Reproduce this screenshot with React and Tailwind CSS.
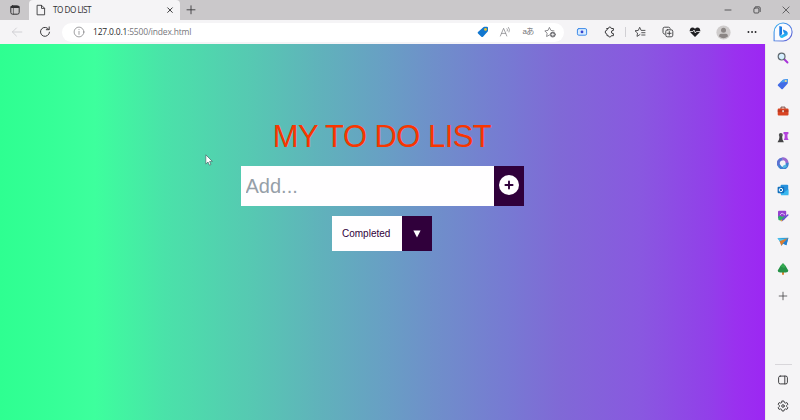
import React from "react";

const line = { fill: "none", stroke: "currentColor", strokeLinecap: "round", strokeLinejoin: "round" };

function Cell({ className, children }) {
  return <div className={`flex shrink-0 items-center justify-center ${className}`}>{children}</div>;
}

function Icon({ size = 12, sw = 0.9, className = "text-[#3a3a3c]", children }) {
  return (
    <svg width={size} height={size} viewBox="0 0 12 12" className={`block shrink-0 ${className}`} {...line} strokeWidth={sw}>
      {children}
    </svg>
  );
}

function TabBar() {
  return (
    <div className="flex h-5 shrink-0 bg-[#cac8ca]">
      <Cell className="w-[29px]">
        <Icon size={12} sw={1} className="text-[#303032]">
          <rect x="1.8" y="1.8" width="8.4" height="8.4" rx="1.8" />
          <path d="M4.4 4.4V10" strokeWidth="0.6" />
          <path d="M2.4 3H9.6" strokeWidth="1.9" />
        </Icon>
      </Cell>
      <div className="flex w-[151px] items-center rounded-t-[4px] bg-[#f5f4f6]">
        <Cell className="w-6">
          <Icon size={12}>
            <path d="M2.5 1.3H6.6L9.6 4.3V10.8H2.5ZM6.5 1.5V4.4H9.4" />
          </Icon>
        </Cell>
        <span className="font-['Open_Sans','Noto_Sans',sans-serif] text-[8.2px] leading-5 tracking-[-0.5px] text-[#303032]">TO DO LIST</span>
        <Cell className="ml-auto w-[21px]">
          <Icon size={12} sw={1}>
            <path d="M3.7 3.8L8.3 8.4M8.3 3.8L3.7 8.4" />
          </Icon>
        </Cell>
      </div>
      <Cell className="w-[21px]">
        <Icon size={12}>
          <path d="M6 1.8V9.8M2 5.8H10" />
        </Icon>
      </Cell>
      <div className="ml-auto flex text-[#454547]">
        <Cell className="w-7"><Icon sw={0.8}><path d="M3 6H9" /></Icon></Cell>
        <Cell className="w-[29px]">
          <Icon sw={0.8}>
            <rect x="2.9" y="4" width="5" height="5" rx="1" />
            <path d="M4.5 2.8H8Q9.2 2.8 9.2 4V7.6" />
          </Icon>
        </Cell>
        <Cell className="w-[29px]"><Icon sw={0.7}><path d="M2.9 2.9L9.1 9.1M9.1 2.9L2.9 9.1" /></Icon></Cell>
      </div>
    </div>
  );
}

function Tag() {
  return (
    <svg width="12" height="12" viewBox="0 0 12 12" className="block">
      <path d="M6.3 1.2Q6.8 .8 7.4 .8L9.8 .7Q11 .7 11 1.8V4.6Q11 5.3 10.5 5.8L6 10.7Q5.2 11.4 4.4 10.7L1 7.5Q.2 6.7 1 5.9Z" fill="#1277cf" />
      <circle cx="8.5" cy="3.4" r="1.4" fill="#f4c430" />
    </svg>
  );
}

function Bing() {
  return (
    <svg width="20" height="20" viewBox="0 0 20 20" className="block">
      <defs>
        <linearGradient id="bubble" x1="0" y1="0" x2="1" y2="1">
          <stop offset="0" stopColor="#35b5f2" />
          <stop offset=".55" stopColor="#4f7de0" />
          <stop offset="1" stopColor="#6a63d5" />
        </linearGradient>
        <linearGradient id="bee" x1="0" y1="0" x2="0" y2="1">
          <stop offset="0" stopColor="#1b7be6" />
          <stop offset="1" stopColor="#2cc5f5" />
        </linearGradient>
      </defs>
      <path d="M1.1 18.8V10A9 9 0 1 1 10 19Z" fill="#fbfbfe" stroke="url(#bubble)" strokeWidth="1.1" />
      <path d="M6.3 3.9L9 4.8V12.1L7 14.2Q6.3 13.8 6.3 13Z" fill="#1978e3" />
      <path d="M9.9 7.4L13.4 8.9Q15 9.8 14.8 11.8Q14.6 13.1 13.4 13.7L9.3 16Q7.8 16.4 6.6 14.2L11.4 11.7L10.5 10.2Z" fill="url(#bee)" />
    </svg>
  );
}

function Toolbar() {
  return (
    <div className="flex h-6 shrink-0 items-center bg-[#f5f4f6]">
      <Cell className="w-[33px]">
        <Icon className="text-[#cdccd0]"><path d="M10.8 6H1.4M5.4 2L1.4 6L5.4 10" /></Icon>
      </Cell>
      <Cell className="w-[29px] pr-[5px]">
        <Icon size={12} sw={1}><path d="M9.8 3.4A4.5 4.5 0 1 0 10.5 6.2M10.2 .9V3.7H7.3" /></Icon>
      </Cell>
      <div className="flex h-[19px] w-[502px] items-center rounded-full bg-white">
        <Cell className="w-[31px] pl-[3px]">
          <Icon sw={0.7} className="text-[#77777a]">
            <circle cx="6" cy="6" r="4.9" /><path d="M6 5.4V8.4M6 3.5V3.7" />
          </Icon>
        </Cell>
        <span className="-mt-px font-['Open_Sans','Noto_Sans',sans-serif] text-[8.5px] leading-[19px] tracking-[-0.19px] text-[#77777c]">
          <span className="text-[#29292c]">127.0.0.1</span>:5500/index.html
        </span>
        <div className="ml-auto flex pr-[3px]">
          <Cell className="w-[23px]"><Tag /></Cell>
          <Cell className="w-[23px] pr-[2px]">
            <Icon sw={0.75} className="text-[#858589]">
              <path d="M1.4 10L4.6 2.3L7.8 10M2.5 7.4H6.7M8 2.7Q9 3.8 8.3 5M9.5 1.4Q11.4 3.6 10 6" />
            </Icon>
          </Cell>
          <Cell className="w-[22px]">
            <span className="font-['Liberation_Sans','Noto_Sans_CJK_JP',sans-serif] text-[8px] leading-3 tracking-[-0.8px] text-[#77777b]">aあ</span>
          </Cell>
          <Cell className="w-[22px]">
            <Icon sw={0.8} className="text-[#727276]">
              <path d="M5.5 9L2.6 10.5L3.1 7.2L.8 4.9L4 4.4L5.4 1.4L6.9 4.4L10 4.9" />
              <circle cx="8.8" cy="8.6" r="2.5" fill="#727276" />
              <path d="M8.8 7.4V9.8M7.6 8.6H10" stroke="#fff" strokeWidth=".8" />
            </Icon>
          </Cell>
        </div>
      </div>
      <Cell className="w-9">
        <Icon sw={1} className="text-[#3d8ae8]">
          <rect x="1.4" y="2.6" width="9.2" height="6.6" rx="1.4" fill="#d9ebff" />
          <circle cx="6" cy="5.9" r="1.4" fill="#3545d0" stroke="none" />
        </Icon>
      </Cell>
      <Cell className="w-5">
        <Icon sw={1}>
          <path d="M3 2.5H4.4Q4.5 1 5.8 1T7.3 2.5H9.4V4.4Q7.4 4.3 7.4 6T9.4 7.6V9.7H7.3Q7.1 11 5.8 11T4.4 9.7H3V8.2Q1.2 7.6 1.2 6T3 3.9Z" />
        </Icon>
      </Cell>
      <Cell className="w-3 pr-px"><div className="h-[10px] w-px bg-[#d1d0d4]" /></Cell>
      <Cell className="w-4">
        <Icon sw={0.85}>
          <path d="M6 8.5L3 10.4L3.5 7L1 4.8L4.3 4.4L5.7 1.3L7.1 4.4H11M7.7 6.7H11M7.7 9H11" />
        </Icon>
      </Cell>
      <Cell className="w-[39px]">
        <Icon sw={0.9}>
          <rect x="3.8" y="3.8" width="7" height="7" rx="1.6" />
          <path d="M7.3 5.5V9.1M5.5 7.3H9.1M2.6 8.2Q1 7.8 1 6.5V2.8Q1 1.2 2.6 1.2H6.5Q7.9 1.2 8.2 2.4" />
        </Icon>
      </Cell>
      <Cell className="w-4">
        <svg width="12" height="12" viewBox="0 0 12 12" className="block">
          <path d="M6 11L1.5 6.6Q0 4.8 1.2 2.7Q3.5.3 6 2.8Q8.5.3 10.8 2.7Q12 4.8 10.5 6.6Z" fill="#202023" />
          <path d="M1 5.5H4L5 4L6.3 7L7.4 5.5H11" fill="none" stroke="#f5f4f6" strokeWidth=".8" />
        </svg>
      </Cell>
      <Cell className="w-[41px]">
        <svg width="15" height="15" viewBox="0 0 15 15" className="block">
          <circle cx="7.5" cy="7.5" r="7.1" fill="#cfcccc" />
          <circle cx="7.5" cy="5.2" r="2.5" fill="#8b8685" />
          <path d="M3.1 11.5Q3.1 8.7 5 8.7H10Q11.9 8.7 11.9 11.5Q7.5 15 3.1 11.5" fill="#8b8685" />
        </svg>
      </Cell>
      <Cell className="w-4">
        <Icon sw={1.8} className="text-[#29292c]"><path d="M2.4 6H2.5M6 6H6.1M9.5 6H9.6" /></Icon>
      </Cell>
      <Cell className="ml-auto w-[35px]"><Bing /></Cell>
    </div>
  );
}

function Art({ children }) {
  return (
    <Cell className="h-[26.3px] w-full">
      <svg width="12" height="12" viewBox="0 0 12 12" className="block">{children}</svg>
    </Cell>
  );
}

function Sidebar() {
  return (
    <aside className="flex w-[35px] shrink-0 flex-col items-center border-l border-[#eeeae8] bg-[#f5f4f6] pt-[1px]">
      <Art>
        <path d="M7 7L10.5 10.5" stroke="#a832d8" strokeWidth="1.9" strokeLinecap="round" />
        <circle cx="4.6" cy="4.6" r="3.4" fill="#d6efff" stroke="#606970" strokeWidth="1.2" />
      </Art>
      <Art>
        <path d="M6 1.7L10.4.9Q11 .9 11 1.6L10.7 5.4L5.8 10.9Q5.1 11.5 4.4 10.9L1 7.7Q.4 7.1 1 6.4Z" fill="#426be5" />
        <path d="M6 1.7L10.4.9Q11 .9 11 1.6L10.9 4L3 4.5Z" fill="#49a3ed" />
        <circle cx="8.8" cy="3" r="1.1" fill="#f6d58c" />
      </Art>
      <Art>
        <path d="M4 4V2.1H8V4" fill="none" stroke="#7c4a40" strokeWidth="1" />
        <rect x=".7" y="3.5" width="10.8" height="7" rx="1" fill="#d84322" />
        <path d="M.7 6H11.5" stroke="#9d2f1e" strokeWidth=".9" />
        <rect x="5.2" y="5.2" width="1.8" height="2" fill="#e6cfc7" />
      </Art>
      <Art>
        <circle cx="3.8" cy="4" r="2" fill="#505052" />
        <path d="M2.6 5H5.1L5.5 8.5L6.9 11.2H.5L2 8.5Z" fill="#444446" />
        <path d="M6.5 1H11.4V3L10.4 3.5L10.6 7L11.6 9H6.8L7.6 7L7.7 3.5L6.5 3Z" fill="#b444dc" />
      </Art>
      <Art>
        <path d="M2 8.5A4.2 4.2 0 0 1 5.8 2" fill="none" stroke="#5b72d1" strokeWidth="3" />
        <path d="M5.5 1.9A4 4 0 0 1 10 6.5" fill="none" stroke="#9b68cf" strokeWidth="3" />
        <path d="M10 5.9A4 4 0 0 1 2 8.2" fill="none" stroke="#3e82d2" strokeWidth="3" />
        <path d="M9.2 8.4A4 4 0 0 1 6 10" fill="none" stroke="#52b9df" strokeWidth="2.6" />
      </Art>
      <Art>
        <rect x="3.6" y=".8" width="7.6" height="10" rx="1" fill="#2690dc" />
        <path d="M4 6L7.5 8L11.5 5.3V11.2H4Z" fill="#38b7ef" />
        <rect x=".6" y="2.8" width="6.6" height="6.5" rx="1" fill="#106fbd" />
        <circle cx="3.9" cy="6" r="1.7" fill="none" stroke="#fff" strokeWidth="1" />
      </Art>
      <Art>
        <rect x="1" y=".8" width="8.2" height="7.4" rx="1" fill="#9543d0" />
        <path d="M3 5L5 3L8 5" fill="none" stroke="#ead6ff" strokeWidth=".8" />
        <path d="M1 7Q3 4.5 5 7L8 6V9L5 11L1.5 10Z" fill="#2eaf6b" />
        <path d="M5 10.5L10.8 5" stroke="#664bd6" strokeWidth="1.6" strokeLinecap="round" />
        <path d="M3.7 11L5.2 10" stroke="#eaa345" strokeWidth="1.5" />
      </Art>
      <Art>
        <path d="M.5 2L11.4 1.7L9.4 9.2L6.2 7.8L4.3 10L3.6 6.7Z" fill="#31a1dd" />
        <path d="M.5 2L8.2 3.4L3.6 6.4Z" fill="#52c5ed" />
        <path d="M11 2L2.6 5.2L4.3 9.8L6 7.5Z" fill="#db7b32" />
        <path d="M6 7.5L11.4 1.7L9.4 9.2Z" fill="#257dce" />
      </Art>
      <Art>
        <path d="M5 8H7V11.7H5Z" fill="#db8133" />
        <path d="M6 .2L8.8 3.2L9.8 5L11.3 7.6Q11.3 9.6 8.7 9.6H3.3Q.7 9.6 .7 7.6L2.2 5L3.2 3.2Z" fill="#269247" />
        <path d="M6 .2L8.8 3.2L7 5L3.2 3.2Z" fill="#35a952" />
      </Art>
      <Cell className="h-[29px] w-full"><Icon sw={0.75}><path d="M6 2.2V9.8M2.2 6H9.8" /></Icon></Cell>
      <div className="mt-auto h-px w-[17px] bg-[#d8d6da]" />
      <Cell className="h-[29px] w-full">
        <Icon sw={0.95}><rect x="1.6" y="2.1" width="8.8" height="7.8" rx="1.6" /><path d="M7.8 2.1V9.9" /></Icon>
      </Cell>
      <Cell className="mb-[2px] h-6 w-full">
        <Icon sw={0.95}>
          <path d="M5.1 1H6.9L7.4 2.6L8.3 3.1L9.9 2.6L10.9 4.2L9.7 5.4V6.6L10.9 7.8L9.9 9.4L8.3 8.9L7.4 9.4L6.9 11H5.1L4.6 9.4L3.7 8.9L2.1 9.4L1.1 7.8L2.3 6.6V5.4L1.1 4.2L2.1 2.6L3.7 3.1L4.6 2.6Z" />
          <circle cx="6" cy="6" r="1.3" />
        </Icon>
      </Cell>
    </aside>
  );
}

function TodoPage() {
  return (
    <main className="flex min-w-0 flex-1 flex-col items-center bg-[linear-gradient(90deg,#2eff91_0px,#35ff97_50px,#3dff9d_95px,#4ae2a9_165px,#56c9b2_250px,#60b2bb_320px,#689fc4_385px,#6f8fca_435px,#7779d3_510px,#8069d6_560px,#8958e0_640px,#923fe9_710px,#9a31ef_735px,#9c27f3_765px)] pt-[72px] pr-px font-['Liberation_Sans',Arial,sans-serif]">
      <h1 className="text-[31px] leading-[42px] tracking-[-0.55px] text-[#f83600]">MY TO DO LIST</h1>
      <form className="mt-2 flex h-10">
        <input placeholder="Add..." className="w-[253px] bg-[#fffeff] px-[5px] text-[20px] text-[#30003b] outline-none placeholder:text-[#969fa8]" />
        <button type="button" aria-label="Add" className="flex w-[30px] items-center justify-center bg-[#30003b] pb-[2px]">
          <svg width="20" height="20" viewBox="0 0 20 20" className="block">
            <circle cx="10" cy="10" r="10" fill="#fffeff" />
            <path d="M10 6.4V13.6M6.4 10H13.6" stroke="#30003b" strokeWidth="1.9" strokeLinecap="round" />
          </svg>
        </button>
      </form>
      <div className="mt-[10px] flex h-[35px]">
        <div className="flex w-[70px] items-center bg-[#fffeff] pl-[10px] text-[10px] text-[#30003b]">Completed</div>
        <div className="flex w-[30px] items-center justify-center bg-[#30003b]">
          <svg width="8" height="8" viewBox="0 0 8 8" className="block"><path d="M.4.6H7.6L4 7.6Z" fill="#fffeff" /></svg>
        </div>
      </div>
    </main>
  );
}

export default function App() {
  return (
    <div className="relative flex h-[420px] w-[800px] flex-col overflow-hidden bg-[#f5f4f6]">
      <TabBar />
      <Toolbar />
      <div className="flex min-h-0 flex-1">
        <TodoPage />
        <Sidebar />
      </div>
      <svg width="8" height="12" viewBox="0 0 8 12" className="absolute left-[205px] top-[154px]">
        <path d="M.8.8V10L3 8L4.4 11.2L6 10.5L4.6 7.4H7.4Z" fill="#fff" stroke="#456c68" strokeWidth=".7" />
      </svg>
    </div>
  );
}
